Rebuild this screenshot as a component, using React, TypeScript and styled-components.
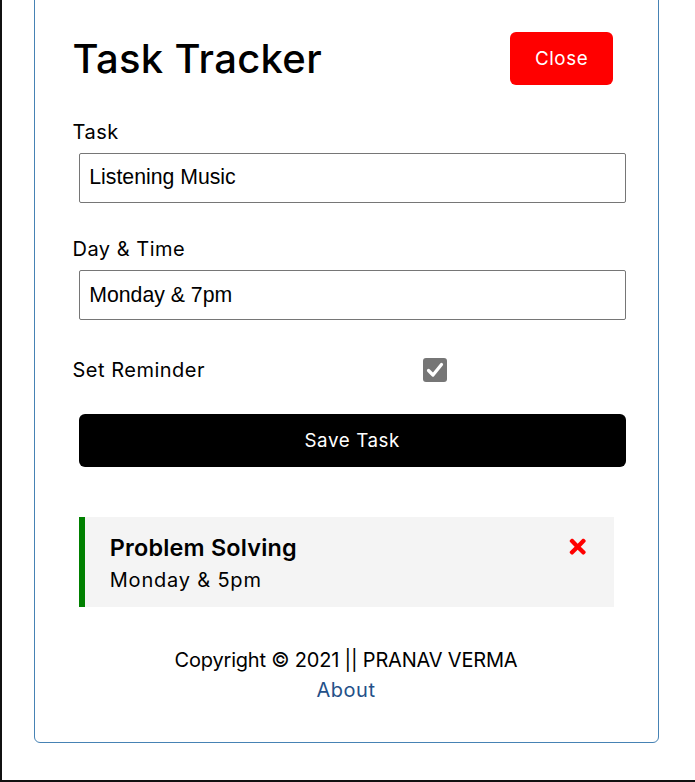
import { createGlobalStyle, styled } from "styled-components";
import { FaTimes } from "react-icons/fa";

const Global = createGlobalStyle`
    * {
        box-sizing: border-box;
        margin: 0;
        padding: 0;
    }
    body {
        font-family: Inter, "Noto Sans", sans-serif;
        background: #fff;
        color: #000;
        letter-spacing: 0.5px;
    }
`;

const tasks = [
    { id: 1, text: "Problem Solving", day: "Monday & 5pm", reminder: true },
];

export default function App() {
    return (
        <>
            <Global />
            <Frame>
                <Container>
                    <Header>
                        <Title>Task Tracker</Title>
                        <Button $bg="#ff0000">Close</Button>
                    </Header>

                    <AddForm onSubmit={(e) => e.preventDefault()}>
                        <FormControl>
                            <Label>Task</Label>
                            <TextInput type="text" defaultValue="Listening Music" />
                        </FormControl>
                        <FormControl>
                            <Label>Day &amp; Time</Label>
                            <TextInput type="text" defaultValue="Monday & 7pm" />
                        </FormControl>
                        <CheckRow>
                            <CheckLabel>Set Reminder</CheckLabel>
                            <CheckWrap>
                                <CheckBox>
                                    <svg width="20" height="20" viewBox="0 0 20 20">
                                        <path d="M3.5 10.5 L8 15 L16.5 4.5" fill="none" stroke="#fff" strokeWidth="3.2" strokeLinecap="round" strokeLinejoin="round" />
                                    </svg>
                                </CheckBox>
                            </CheckWrap>
                        </CheckRow>
                        <Button $block $bg="#000">Save Task</Button>
                    </AddForm>

                    {tasks.map((task) => (
                        <Task key={task.id} $reminder={task.reminder}>
                            <TaskTitle>
                                {task.text}
                                <FaTimes color="red" />
                            </TaskTitle>
                            <TaskDay>{task.day}</TaskDay>
                        </Task>
                    ))}

                    <Footer>
                        <p>Copyright © 2021 || PRANAV VERMA</p>
                        <FooterLink href="#">About</FooterLink>
                    </Footer>
                </Container>
            </Frame>
        </>
    );
}

const Frame = styled.div`
    width: 695px;
    height: 782px;
    overflow: hidden;
    border-left: 2px solid #111;
    border-bottom: 2px solid #111;
    padding-right: 4px;
`;

const Container = styled.div`
    width: 625px;
    margin: -12.5px auto 0;
    border: 1px solid steelblue;
    border-radius: 6px;
    padding: 37.5px 38.5px 37.5px 37.5px;
`;

const Header = styled.header`
    display: flex;
    justify-content: space-between;
    align-items: center;
    margin-bottom: 25px;
`;

const Title = styled.h1`
    font-size: 40px;
    font-weight: 500;
    line-height: 60px;
    letter-spacing: 0.3px;
`;

const Button = styled.button<{ $bg: string; $block?: boolean }>`
    display: ${(p) => (p.$block ? "block" : "inline-block")};
    width: ${(p) => (p.$block ? "100%" : "auto")};
    background: ${(p) => p.$bg};
    color: #fff;
    border: none;
    padding: 12.5px 25px;
    margin: 6.25px;
    border-radius: 6px;
    font-family: inherit;
    font-size: 18.75px;
    letter-spacing: 0.6px;
    line-height: 28px;
    cursor: pointer;
`;

const AddForm = styled.form`
    margin-bottom: 50px;
`;

const FormControl = styled.div`
    margin: 25px 0;
`;

const Label = styled.label`
    display: block;
    font-size: 20px;
    line-height: 30px;
`;

const TextInput = styled.input`
    width: 100%;
    height: 50px;
    margin: 6.25px;
    padding: 3.75px 9.5px;
    font-family: "Liberation Sans", Arial, sans-serif;
    font-size: 21.25px;
    letter-spacing: 0;
    color: #000;
    border: 1px solid #767676;
    border-radius: 2px;
`;

const CheckRow = styled(FormControl)`
    display: flex;
    align-items: center;
    justify-content: space-between;
`;

const CheckLabel = styled(Label)`
    flex: 1;
`;

const CheckWrap = styled.div`
    flex: 2;
    height: 25px;
    margin: 6.25px;
    display: flex;
    justify-content: center;
    align-items: center;
`;

const CheckBox = styled.span`
    width: 24px;
    height: 24px;
    border-radius: 3px;
    background: #767676;
    display: flex;
    align-items: center;
    justify-content: center;
`;

const Task = styled.div<{ $reminder: boolean }>`
    background: #f4f4f4;
    margin: 6.25px 5.25px 6.25px 6.25px;
    padding: 12.5px 25px;
    border-left: ${(p) => (p.$reminder ? "6.25px solid green" : "none")};
    cursor: pointer;
`;

const TaskTitle = styled.h3`
    display: flex;
    align-items: center;
    justify-content: space-between;
    font-size: 23.4px;
    font-weight: 600;
    line-height: 35px;
    letter-spacing: 0.2px;
    svg {
        cursor: pointer;
    }
`;

const TaskDay = styled.p`
    font-size: 20px;
    line-height: 30px;
    letter-spacing: 0.8px;
`;

const Footer = styled.footer`
    margin-top: 37.5px;
    text-align: center;
    font-size: 20px;
    line-height: 30px;
    letter-spacing: -0.2px;
`;

const FooterLink = styled.a`
    color: #245088;
    text-decoration: none;
    letter-spacing: 0.5px;
`;
